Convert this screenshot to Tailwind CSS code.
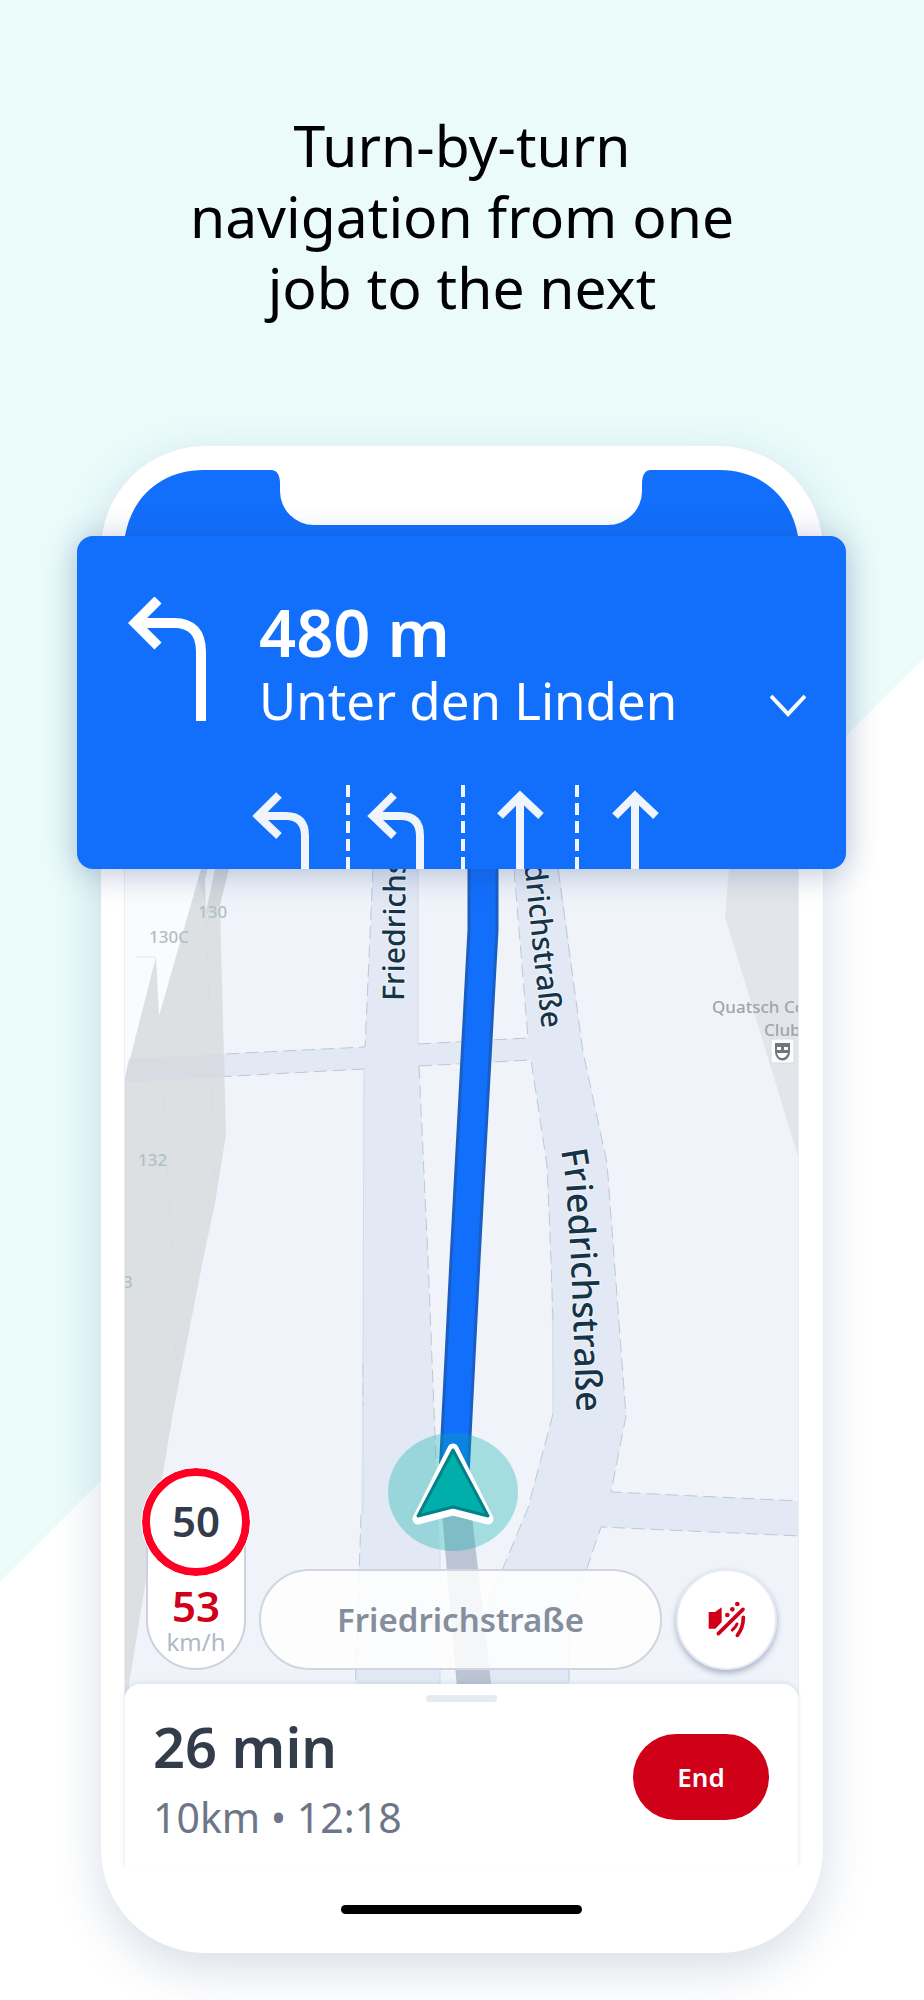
<!DOCTYPE html>
<html lang="en">
<head>
    <meta charset="UTF-8">
    <meta name="viewport" content="width=device-width, initial-scale=1.0">
    <title>Turn-by-turn navigation</title>
    <script src="https://cdn.jsdelivr.net/npm/@tailwindcss/browser@4"></script>
</head>
<body class="min-h-screen overflow-x-hidden bg-[linear-gradient(135deg,#eafbfa_1118px,#ffffff_1119px)] font-['Noto_Sans',sans-serif]">
    <main class="flex flex-col items-center px-6 pt-[110px] pb-[47px]">
        <h1 class="max-w-[600px] text-center text-[57px] leading-[71px] text-black">Turn-by-turn navigation from one job to the next</h1>

        <!-- Phone -->
        <div class="mt-[123px] w-full max-w-[722px] rounded-[104px] bg-white pt-6 pr-6 pl-[23px] shadow-[0_16px_48px_rgba(60,90,140,0.20)]">

            <!-- Status area with notch -->
            <svg class="block h-[66px] w-full" viewBox="0 0 675 66" preserveAspectRatio="none" fill="#126ffb" aria-hidden="true">
                <path d="M1 66C8 26 38 0 80 0H148Q156 1 156 14V21A34 34 0 0 0 190 55H484A34 34 0 0 0 518 21V14Q518 1 526 0H595C637 0 667 26 674 66Z"/>
            </svg>

            <!-- Manoeuvre card -->
            <section class="relative z-10 -mx-[47px] h-[333px] rounded-2xl bg-[#126ffb] text-white shadow-[0_4px_32px_rgba(30,60,130,0.30)]">
                <div class="flex items-start pt-[61px] pr-10 pl-[51px]">
                    <svg class="h-[124px] w-20 shrink-0" viewBox="128 597 80 124" fill="none" stroke="#fff" stroke-width="10" aria-hidden="true">
                        <path d="M158 600L135 623L158 646M137 623H174Q201 623 201 652V721"/>
                    </svg>
                    <div class="ml-[51px] grow">
                        <p class="text-[65px] leading-[70px] font-semibold">480 m</p>
                        <p class="text-[51px] leading-[66px]">Unter den Linden</p>
                    </div>
                    <button type="button" aria-label="Show next steps" class="mt-[97px] shrink-0">
                        <svg class="h-6 w-9" viewBox="0 0 36 24" fill="none" stroke="#fff" stroke-width="4">
                            <path d="M1 2L18 20L35 2"/>
                        </svg>
                    </button>
                </div>
                <!-- Lanes -->
                <svg class="absolute bottom-0 left-[175px] h-[84px] w-[410px]" viewBox="252 785 410 84" fill="none" stroke="#f0f4fb" stroke-width="8" aria-hidden="true">
                    <path d="M279 795L258 816L279 836M260 816H286Q305 816 305 836V869"/>
                    <path d="M394 795L373 816L394 836M375 816H401Q420 816 420 836V869"/>
                    <path d="M500 816L520 796L541 816M520 797V869"/>
                    <path d="M615 816L635 796L656 816M635 797V869"/>
                    <path d="M348 785V869M463 785V869M577 785V869" stroke-width="4" stroke-dasharray="12 6"/>
                </svg>
            </section>

            <!-- Map -->
            <div class="relative flex h-[829px] items-end border-x border-[#e8edf4] bg-[#f0f4fa]">
                <svg class="absolute inset-0 h-full w-full" viewBox="125 869 673 829" preserveAspectRatio="xMidYMin slice" fill="none">
                    <!-- Roads -->
                    <g fill="#e2e9f4">
                        <path d="M373 860L365 1047L364 1069L363 1364L361 1515L355 1700H440V1550L436 1460L428 1260L419 1066L418 1044V860Z"/>
                        <path d="M120 1059L365 1047L418 1044L528 1038L531 1060L419 1066L364 1069L120 1082Z"/>
                        <path d="M514 860L528 1038L531 1060L547 1165L551 1260L553 1414L528 1508L503 1568L485 1610L482 1700H569L570 1610L587 1568L601 1527L800 1536V1501L611 1492L626 1416L607 1163L583 1052L558 860Z"/>
                    </g>
                    <g stroke="#c0c7d3" stroke-dasharray="13 6">
                        <path d="M373 869L365 1047L124 1059M124 1082L364 1069M363 1364V1407M361 1515L355 1700"/>
                        <path d="M418 1044L528 1038L514 869M419 1066L531 1060L547 1165L551 1260L553 1320M419 1066L428 1260L436 1460"/>
                        <path d="M553 1414L528 1508L503 1568L485 1610V1700M558 869L583 1052L607 1163L626 1416L611 1492L800 1501M569 1700V1620L587 1568L601 1527L800 1536"/>
                    </g>
                    <path d="M418 869V1044M364 1069L363 1364V1515M553 1320V1414M440 1550V1700" stroke="#d2d9e5"/>

                    <!-- Buildings -->
                    <path d="M120 860H204L159 1016L156 957L120 1098Z" fill="#fafbfe"/>
                    <path d="M137 957H156" stroke="#e2e6f1"/>
                    <path d="M120 1098L156 957L159 1016L203 862H209L205 880L206 910L217 860H231L220 905L224 1060L226 1135L215 1203L203 1260L173 1413L163 1473L146 1580L129 1684V1700H120Z" fill="#dce0e3"/>
                    <path d="M203 862H209L205 880V900L198 880ZM217 860H231L220 905L206 914Z" fill="#d4d8dd"/>
                    <path d="M129 1059L224 1054L225 1077L124 1082Z" fill="#d8dbe1"/>
                    <path d="M159 1016L172 1260L176 1360M206 910L212 1100L215 1180" stroke="#d8dce5" stroke-dasharray="22 14"/>
                    <path d="M729 869L725 917L800 1163V860H729Z" fill="#e2e6eb"/>

                    <!-- House numbers and places -->
                    <g fill="#b1c0c3" font-size="17" font-weight="500">
                        <text x="198" y="918">130</text>
                        <text x="149" y="943">130C</text>
                        <text x="138" y="1166">132</text>
                        <text x="123" y="1288">3</text>
                    </g>
                    <g fill="#a1a5aa" font-size="17" font-weight="500">
                        <text x="712" y="1013">Quatsch Comedy</text>
                        <text x="764" y="1036">Club</text>
                    </g>
                    <rect x="771" y="1039" width="23" height="24" fill="#fbfcfe" stroke="#d8dce2"/>
                    <path d="M775 1043H790V1052A7 8 0 0 1 775 1052Z" fill="#737578"/>
                    <path d="M777 1047H781V1050H777ZM784 1047H788V1050H784ZM777 1053H788Q786 1058 782 1058Q778 1058 777 1053Z" fill="#fff"/>

                    <!-- Street names -->
                    <path id="street-left" d="M404 1001L407 760"/>
                    <path id="street-top" d="M514 780L526 880L532 940L542 1029"/>
                    <path id="street-right" d="M561 1150L566 1181L571 1261L577 1421"/>
                    <g fill="#163447" stroke="#f0f4fa" stroke-width="2" paint-order="stroke" font-weight="500">
                        <text font-size="30"><textPath href="#street-left">Friedrichstraße</textPath></text>
                        <text font-size="30" text-anchor="end"><textPath href="#street-top" startOffset="100%">Friedrichstraße</textPath></text>
                        <text font-size="36"><textPath href="#street-right">Friedrichstraße</textPath></text>
                    </g>

                    <!-- Travelled and planned route -->
                    <path d="M440 1490H469L493 1700H458Z" fill="#bcc3d3"/>
                    <g stroke-linejoin="round">
                        <path d="M483 860V930L465 1260L454 1475" stroke="#1a5ec2" stroke-width="31"/>
                        <path d="M483 860V930L465 1260L454 1475" stroke="#126ffb" stroke-width="25"/>
                    </g>
                    <ellipse cx="453" cy="1492" rx="65" ry="59" fill="#00afaa" fill-opacity="0.32"/>
                    <path d="M453 1449L418 1519L453 1510L488 1519Z" fill="#fff" stroke="#fff" stroke-width="11" stroke-linejoin="round"/>
                    <path d="M453 1450L418 1516L453 1507L488 1516Z" fill="#00afaa" stroke="#03808a" stroke-width="3" stroke-linejoin="round"/>
                </svg>

                <div class="relative flex grow items-end pr-[21px] pb-7 pl-[17px]">
                    <div class="flex w-[108px] flex-col items-center">
                        <div class="z-10 flex h-[108px] w-[108px] items-center justify-center rounded-full border-8 border-[#ff0024] bg-white pb-1 text-[42px] font-semibold text-[#333c49] outline-1 outline-white">50</div>
                        <div class="-mt-[54px] flex h-[148px] w-[100px] flex-col items-center rounded-b-full border-2 border-[#cdd1de] bg-white pt-[60px]">
                            <span class="text-[42px] leading-[44px] font-semibold text-[#cf0018]">53</span>
                            <span class="text-2xl leading-7 text-[#b0b7c6]">km/h</span>
                        </div>
                    </div>
                    <div class="ml-[9px] flex h-[101px] grow items-center justify-center rounded-full border-2 border-[#d0d5e0] bg-white/85 text-[33px] font-semibold text-[#858e9c]">Friedrichstraße</div>
                    <button type="button" aria-label="Unmute" class="ml-[14px] flex h-[101px] w-[101px] items-center justify-center rounded-full border-2 border-[#e6eaf2] bg-white shadow-[0_3px_6px_rgba(60,70,120,0.4)]">
                        <svg class="h-10 w-10" viewBox="140 150 120 120" fill="none" stroke="#cf0018" stroke-linecap="round">
                            <path d="M145 186H164L184 172V217L165 236H145Z" fill="#cf0018" stroke="none"/>
                            <path d="M174 251L248 178" stroke-width="11"/>
                            <path d="M249 202Q249 234 231 256" stroke-width="11"/>
                            <path d="M230 222Q226 232 216 240" stroke-width="9"/>
                            <g fill="#cf0018" stroke="none">
                                <circle cx="231" cy="162" r="7"/>
                                <circle cx="216" cy="178" r="7"/>
                                <circle cx="201" cy="195" r="7"/>
                            </g>
                        </svg>
                    </button>
                </div>
            </div>

            <!-- Trip summary -->
            <section class="relative -mt-[14px] rounded-t-2xl border-x border-[#f0f3f8] bg-white pt-[11px] shadow-[0_-2px_4px_rgba(60,80,130,0.10)]">
                <div class="mx-auto h-[7px] w-[71px] rounded-full bg-[#e6eaf1]"></div>
                <div class="flex items-start justify-between pt-1 pr-[29px] pb-[18px] pl-7">
                    <div>
                        <p class="text-[56px] leading-[80px] font-semibold text-[#333c49]">26 min</p>
                        <p class="text-[41px] leading-[62px] text-[#6d7687]">10km • 12:18</p>
                    </div>
                    <button type="button" class="mt-7 h-[86px] w-[136px] rounded-full bg-[#cf0018] text-[26px] font-semibold text-white">End</button>
                </div>
            </section>
            <div class="pt-[39px] pb-[39px]">
                <div class="mx-auto h-[9px] w-[241px] rounded-full bg-black"></div>
            </div>
        </div>
    </main>
</body>
</html>
